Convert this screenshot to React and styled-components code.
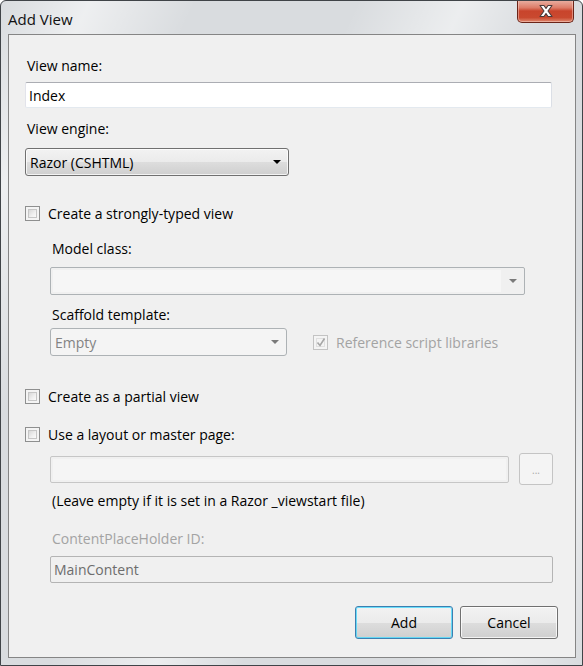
import React from 'react';
import styled, { createGlobalStyle } from 'styled-components';

const GlobalStyle = createGlobalStyle`
  html, body {
    margin: 0;
    padding: 0;
    background: #ffffff;
  }
  * {
    box-sizing: border-box;
  }
`;

const Window = styled.div`
  width: 583px;
  height: 666px;
  display: flex;
  flex-direction: column;
  border: 1px solid #404448;
  border-radius: 6px 6px 0 0;
  background:
    linear-gradient(115deg, rgba(255,255,255,0) 0%, rgba(255,255,255,0.55) 10%, rgba(255,255,255,0) 22%,
      rgba(255,255,255,0) 40%, rgba(255,255,255,0.5) 52%, rgba(255,255,255,0) 62%,
      rgba(255,255,255,0) 80%, rgba(255,255,255,0.45) 90%, rgba(255,255,255,0) 100%),
    #d9dcdf;
  font-family: "Open Sans", "Noto Sans", sans-serif;
  font-size: 14px;
  color: #000;
  overflow: hidden;
`;

const TitleBar = styled.div`
  height: 33px;
  display: flex;
  align-items: flex-start;
  justify-content: space-between;
  padding: 0 8px 0 7px;
`;

const Title = styled.div`
  margin-top: 9px;
  font-size: 15px;
  line-height: 18px;
  color: #111;
`;

const CloseButton = styled.div`
  width: 57px;
  height: 23px;
  margin-top: -1px;
  display: flex;
  align-items: center;
  justify-content: center;
  border: 1px solid #6b2418;
  border-top: none;
  border-radius: 0 0 5px 5px;
  background: linear-gradient(#eab3a6 0%, #dd7c68 35%, #c8442c 50%, #c9492f 80%, #df8a70 100%);
  box-shadow: inset 0 0 0 1px rgba(255, 220, 210, 0.45);
`;

const Client = styled.div`
  flex: 1;
  margin: 0 6px 7px 7px;
  border: 1px solid #858585;
  background: #f0f0f0;
  padding: 22px 0 0 16px;
  display: flex;
  flex-direction: column;
`;

const Label = styled.div`
  line-height: 18px;
  padding-left: 2px;
  margin-top: ${p => p.$top || 0}px;
  color: ${p => (p.$disabled ? '#a3a3a3' : '#000')};
`;

const TextBox = styled.div`
  width: ${p => p.$width}px;
  height: ${p => p.$height || 26}px;
  margin-top: ${p => p.$top || 0}px;
  display: flex;
  align-items: center;
  padding-left: 3px;
  border: 1px solid;
  border-color: ${p => (p.$disabled ? '#b4b4b4' : '#abadb3 #dbdfe6 #e3e9ef #e2e3ea')};
  border-radius: 2px;
  background: ${p => (p.$disabled ? '#f0f0f0' : '#ffffff')};
  color: ${p => (p.$disabled ? '#6d6d6d' : '#000')};
`;

const InactiveField = styled.div`
  width: ${p => p.$width}px;
  height: 27px;
  border: 1px solid #c6c6c6;
  border-radius: 2px;
  background: #f0f0f0;
  padding: 2px;
  display: flex;
`;

const InactiveInner = styled.div`
  flex: 1;
  background: #f5f5f5;
`;

const ComboButton = styled.div`
  width: ${p => p.$width}px;
  height: ${p => p.$height || 28}px;
  margin-top: ${p => p.$top || 0}px;
  display: flex;
  align-items: center;
  justify-content: space-between;
  padding: 0 7px 0 4px;
  border: 1px solid ${p => (p.$disabled ? '#adb2b5' : '#707070')};
  border-radius: 3px;
  background: ${p =>
    p.$disabled
      ? '#f4f4f4'
      : 'linear-gradient(#f2f2f2 0%, #ebebeb 50%, #dddddd 51%, #cfcfcf 100%)'};
  box-shadow: ${p => (p.$disabled ? 'none' : 'inset 0 0 0 1px rgba(255,255,255,0.75)')};
  color: ${p => (p.$disabled ? '#838383' : '#000')};
`;

const EditCombo = styled.div`
  width: ${p => p.$width}px;
  height: 28px;
  margin-top: ${p => p.$top || 0}px;
  display: flex;
  align-items: stretch;
  border: 1px solid #adb2b5;
  border-radius: 2px;
  background: #f0f0f0;
  padding: 2px 0 2px 2px;
`;

const EditField = styled.div`
  flex: 1;
  background: #f6f6f6;
`;

const ArrowBox = styled.div`
  width: 23px;
  display: flex;
  align-items: center;
  justify-content: center;
`;

const Arrow = styled.span`
  width: 0;
  height: 0;
  border-left: 4px solid transparent;
  border-right: 4px solid transparent;
  border-top: 4px solid ${p => (p.$disabled ? '#7a7a7a' : '#000')};
`;

const CheckRow = styled.div`
  display: flex;
  align-items: center;
  gap: 8px;
  height: 18px;
  margin-top: ${p => p.$top || 0}px;
  color: ${p => (p.$disabled ? '#a3a3a3' : '#000')};
`;

const CheckBox = styled.span`
  width: 15px;
  height: 15px;
  flex: none;
  border: 1px solid ${p => (p.$disabled ? '#c3c3c3' : '#8e8f8f')};
  background: #f4f4f4;
  padding: 2px;
  display: flex;

  &::before {
    content: '';
    flex: 1;
    border: 1px solid ${p => (p.$disabled ? '#e0e0e0' : '#c6c6c6')};
    background: ${p =>
      p.$disabled ? '#f4f4f4' : 'linear-gradient(135deg, #d8d8d8 0%, #f0f0f0 60%, #fafafa 100%)'};
  }
`;

const CheckMark = styled.svg`
  position: absolute;
  left: 2px;
  top: 1px;
`;

const CheckWrap = styled.span`
  position: relative;
  display: flex;
`;

const Indent = styled.div`
  margin-left: 25px;
  display: flex;
  flex-direction: column;
`;

const Row = styled.div`
  display: flex;
  align-items: center;
  margin-top: ${p => p.$top || 0}px;
  gap: ${p => p.$gap || 0}px;
`;

const BrowseButton = styled.div`
  width: 34px;
  height: 32px;
  border: 1px solid #c4c4c4;
  border-radius: 3px;
  background: #f4f4f4;
  color: #a8a8a8;
  font-size: 10px;
  display: flex;
  align-items: center;
  justify-content: center;
  padding-top: 2px;
`;

const ButtonRow = styled.div`
  display: flex;
  gap: 7px;
  margin-top: 23px;
  margin-left: 330px;
`;

const PushButton = styled.div`
  width: ${p => p.$width}px;
  height: 33px;
  display: flex;
  align-items: center;
  justify-content: center;
  border: 1px solid ${p => (p.$default ? '#3c7fb1' : '#707070')};
  border-radius: 3px;
  background: linear-gradient(#f2f2f2 0%, #ebebeb 50%, #dddddd 51%, #cfcfcf 100%);
  box-shadow: inset 0 0 0 1px ${p => (p.$default ? 'rgba(72, 216, 251, 0.8)' : 'rgba(255,255,255,0.75)')};
  font-size: 14px;
`;

const Check = ({ checked, disabled }) => (
  <CheckWrap>
    <CheckBox $disabled={disabled} />
    {checked && (
      <CheckMark width="12" height="12" viewBox="0 0 12 12">
        <path d="M2.5 6.5 L5 9.5 L9.5 2.5" fill="none" stroke="#a6a6a6" strokeWidth="1.6" />
      </CheckMark>
    )}
  </CheckWrap>
);

const App = () => {
  return (
    <>
      <GlobalStyle />
      <Window>
        <TitleBar>
          <Title>Add View</Title>
          <CloseButton>
            <svg width="18" height="14" viewBox="0 0 18 14">
              <path
                d="M3 1.5 L7 1.5 L9 4.5 L11 1.5 L15 1.5 L11 7 L15 12.5 L11 12.5 L9 9.5 L7 12.5 L3 12.5 L7 7 Z"
                fill="#ffffff"
                stroke="#4a3a3a"
                strokeWidth="1.1"
                strokeLinejoin="round"
              />
            </svg>
          </CloseButton>
        </TitleBar>

        <Client>
          <Label>View name:</Label>
          <TextBox $width={527} $top={7}>Index</TextBox>

          <Label $top={12}>View engine:</Label>
          <ComboButton $width={264} $top={10}>
            <span>Razor (CSHTML)</span>
            <Arrow />
          </ComboButton>

          <CheckRow $top={28}>
            <Check />
            <span>Create a strongly-typed view</span>
          </CheckRow>

          <Indent>
            <Label $top={18}>Model class:</Label>
            <EditCombo $width={475} $top={9}>
              <EditField />
              <ArrowBox>
                <Arrow $disabled />
              </ArrowBox>
            </EditCombo>

            <Label $top={11}>Scaffold template:</Label>
            <Row $top={4} $gap={26}>
              <ComboButton $width={237} $height={28} $disabled>
                <span>Empty</span>
                <Arrow $disabled />
              </ComboButton>
              <CheckRow $disabled>
                <Check checked disabled />
                <span>Reference script libraries</span>
              </CheckRow>
            </Row>
          </Indent>

          <CheckRow $top={31}>
            <Check />
            <span>Create as a partial view</span>
          </CheckRow>

          <CheckRow $top={20}>
            <Check />
            <span>Use a layout or master page:</span>
          </CheckRow>

          <Indent>
            <Row $top={10} $gap={10}>
              <InactiveField $width={459}>
                <InactiveInner />
              </InactiveField>
              <BrowseButton>...</BrowseButton>
            </Row>
            <Label $top={7}>(Leave empty if it is set in a Razor _viewstart file)</Label>
            <Label $top={20} $disabled>ContentPlaceHolder ID:</Label>
            <TextBox $width={503} $height={27} $top={8} $disabled>MainContent</TextBox>
          </Indent>

          <ButtonRow>
            <PushButton $width={98} $default>Add</PushButton>
            <PushButton $width={98}>Cancel</PushButton>
          </ButtonRow>
        </Client>
      </Window>
    </>
  );
};

export default App;
